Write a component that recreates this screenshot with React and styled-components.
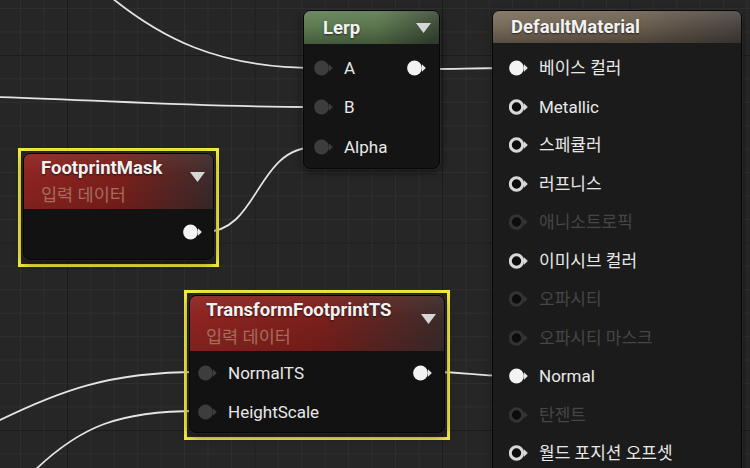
import React from 'react';
import styled, { createGlobalStyle, css } from 'styled-components';

const GlobalStyle = createGlobalStyle`
  html, body {
    margin: 0;
    padding: 0;
    background: #262626;
  }
  body {
    font-family: Roboto, "Noto Sans CJK KR", sans-serif;
  }
`;

const Canvas = styled.div`
  position: relative;
  width: 750px;
  height: 468px;
  overflow: hidden;
  background-color: #262626;
  background-image:
    linear-gradient(180deg, #1b1b1b 1px, transparent 1px),
    linear-gradient(90deg, #1b1b1b 1px, transparent 1px),
    linear-gradient(180deg, #2f2f2f 1px, transparent 1px),
    linear-gradient(90deg, #2f2f2f 1px, transparent 1px);
  background-size:
    187.5px 187.5px,
    187.5px 187.5px,
    23.44px 23.44px,
    23.44px 23.44px;
  background-position:
    0 55px,
    67px 0,
    0 8px,
    20px 0;
`;

const Wires = styled.svg`
  position: absolute;
  inset: 0;
  width: 750px;
  height: 468px;
`;

const Wire = styled.path`
  fill: none;
  stroke: #e4e4e4;
  stroke-width: 1.8;
  stroke-linecap: round;
`;

const Slot = styled.div`
  position: absolute;
  left: ${(p) => p.$x}px;
  top: ${(p) => p.$y}px;
  ${(p) =>
    p.$selected &&
    css`
      border: 3px solid #f4e93c;
      padding: 2px 2px 4px 2px;
    `}
`;

const Node = styled.div`
  width: ${(p) => p.$w}px;
  box-sizing: border-box;
  border-radius: 7px;
  border: 1px solid #060606;
  background: ${(p) => p.$body};
  box-shadow: 0 0 0 1px rgba(255, 255, 255, 0.05), 0 3px 8px rgba(0, 0, 0, 0.55);
  overflow: hidden;
`;

const Header = styled.div`
  display: flex;
  align-items: center;
  justify-content: space-between;
  box-sizing: border-box;
  height: ${(p) => p.$h}px;
  padding: 0 8px 0 ${(p) => p.$pl}px;
  background: ${(p) => p.$bg};
`;

const TitleBlock = styled.div`
  display: flex;
  flex-direction: column;
`;

const Title = styled.div`
  font-size: 18.5px;
  font-weight: 700;
  line-height: 20px;
  color: #f2f2f2;
  text-shadow: 0 1px 2px rgba(0, 0, 0, 0.6);
  white-space: nowrap;
`;

const Subtitle = styled.div`
  margin-top: 7px;
  font-size: 17.5px;
  line-height: 20px;
  color: #a66c5c;
  white-space: nowrap;
`;

const Arrow = styled.svg`
  flex: none;
  align-self: ${(p) => (p.$top ? 'flex-start' : 'center')};
  margin-top: ${(p) => (p.$top ? '18px' : '0')};
`;

const Body = styled.div`
  display: flex;
  flex-direction: column;
  padding: ${(p) => p.$pt}px ${(p) => p.$pr}px ${(p) => p.$pb}px ${(p) => p.$pl}px;
`;

const Row = styled.div`
  display: flex;
  align-items: center;
  gap: 10px;
  height: ${(p) => p.$h}px;
  font-size: 17px;
  color: ${(p) => (p.$dim ? '#464646' : '#e8e8e8')};
  white-space: nowrap;
`;

const Label = styled.span`
  line-height: 20px;
`;

const Spacer = styled.div`
  flex: 1;
`;

const PinIcon = styled.svg`
  flex: none;
  display: block;
`;

const PIN_COLORS = {
  filled: { fill: '#f3f3f3', stroke: 'none', arrow: '#e8e8e8' },
  ring: { fill: '#0c0c0c', stroke: '#d8d8d8', arrow: '#d8d8d8' },
  dim: { fill: '#0c0c0c', stroke: '#333333', arrow: '#333333' },
  muted: { fill: '#3d3d3d', stroke: 'none', arrow: '#3d3d3d' },
};

const Pin = ({ kind }) => {
  const c = PIN_COLORS[kind];
  const ringed = c.stroke !== 'none';
  return (
    <PinIcon width="20" height="16" viewBox="0 0 20 16">
      <circle
        cx="7.5"
        cy="8"
        r={ringed ? 6.2 : 7.4}
        fill={c.fill}
        stroke={c.stroke}
        strokeWidth={ringed ? 3 : 0}
      />
      <polygon points="15,4.3 18.8,8 15,11.7" fill={c.arrow} />
    </PinIcon>
  );
};

const Dropdown = ({ top }) => (
  <Arrow $top={top} width="15" height="10" viewBox="0 0 15 10">
    <polygon points="0,0 15,0 7.5,10" fill="#d6d6d6" />
  </Arrow>
);

const greenHeader = `
  linear-gradient(180deg, rgba(255,255,255,0.10) 0%, rgba(255,255,255,0) 45%, rgba(0,0,0,0.28) 100%),
  linear-gradient(90deg, #5e7d52 0%, #5a774e 55%, #3c4a38 100%)
`;
const brownHeader = `
  linear-gradient(180deg, rgba(255,255,255,0.10) 0%, rgba(255,255,255,0) 45%, rgba(0,0,0,0.28) 100%),
  linear-gradient(90deg, #7a6d5b 0%, #6e6251 55%, #4a4440 100%)
`;
const redHeader = `
  linear-gradient(180deg, rgba(255,255,255,0.06) 0%, rgba(0,0,0,0) 40%, rgba(0,0,0,0.1) 100%),
  linear-gradient(90deg, #8d2420 0%, #7b1f1b 50%, #3a2b2a 100%)
`;

const materialPins = [
  { label: '베이스 컬러', kind: 'filled' },
  { label: 'Metallic', kind: 'ring' },
  { label: '스페큘러', kind: 'ring' },
  { label: '러프니스', kind: 'ring' },
  { label: '애니소트로픽', kind: 'dim' },
  { label: '이미시브 컬러', kind: 'ring' },
  { label: '오파시티', kind: 'dim' },
  { label: '오파시티 마스크', kind: 'dim' },
  { label: 'Normal', kind: 'filled' },
  { label: '탄젠트', kind: 'dim' },
  { label: '월드 포지션 오프셋', kind: 'ring' },
];

export default function App() {
  return (
    <>
      <GlobalStyle />
      <Canvas>
        <Wires viewBox="0 0 750 468">
          <Wire d="M 100 -12 C 160 40, 220 68, 316 68" />
          <Wire d="M -2 97 C 120 101, 200 107, 316 107" />
          <Wire d="M 204 232 C 260 232, 255 147, 316 147" />
          <Wire d="M 428 69 C 460 69, 470 68, 508 68" />
          <Wire d="M 433 372 C 470 372, 470 376, 508 376" />
          <Wire d="M -10 425 C 60 390, 110 372, 198 372" />
          <Wire d="M 30 475 C 80 425, 120 411, 198 411" />
        </Wires>

        <Slot $x={303} $y={10}>
          <Node $w={137} $body="#141414">
            <Header $h={33} $pl={19} $bg={greenHeader}>
              <Title>Lerp</Title>
              <Dropdown />
            </Header>
            <Body $pt={4} $pr={12} $pb={1} $pl={10}>
              <Row $h={39.5}>
                <Pin kind="muted" />
                <Label>A</Label>
                <Spacer />
                <Pin kind="filled" />
              </Row>
              <Row $h={39.5}>
                <Pin kind="muted" />
                <Label>B</Label>
              </Row>
              <Row $h={39.5}>
                <Pin kind="muted" />
                <Label>Alpha</Label>
              </Row>
            </Body>
          </Node>
        </Slot>

        <Slot $x={492} $y={10}>
          <Node $w={250} $body="#1b1b1b">
            <Header $h={32} $pl={18} $bg={brownHeader}>
              <Title>DefaultMaterial</Title>
            </Header>
            <Body $pt={6} $pr={12} $pb={40} $pl={16}>
              {materialPins.map((p) => (
                <Row key={p.label} $h={38.5} $dim={p.kind === 'dim'}>
                  <Pin kind={p.kind} />
                  <Label>{p.label}</Label>
                </Row>
              ))}
            </Body>
          </Node>
        </Slot>

        <Slot $x={18} $y={148} $selected>
          <Node $w={191} $body="#121212">
            <Header $h={55} $pl={17} $bg={redHeader}>
              <TitleBlock>
                <Title>FootprintMask</Title>
                <Subtitle>입력 데이터</Subtitle>
              </TitleBlock>
              <Dropdown top />
            </Header>
            <Body $pt={4} $pr={10} $pb={8} $pl={10}>
              <Row $h={38}>
                <Spacer />
                <Pin kind="filled" />
              </Row>
            </Body>
          </Node>
        </Slot>

        <Slot $x={184} $y={290} $selected>
          <Node $w={256} $body="#121212">
            <Header $h={55} $pl={16} $bg={redHeader}>
              <TitleBlock>
                <Title>TransformFootprintTS</Title>
                <Subtitle>입력 데이터</Subtitle>
              </TitleBlock>
              <Dropdown top />
            </Header>
            <Body $pt={2} $pr={11} $pb={1} $pl={8}>
              <Row $h={39}>
                <Pin kind="muted" />
                <Label>NormalTS</Label>
                <Spacer />
                <Pin kind="filled" />
              </Row>
              <Row $h={39}>
                <Pin kind="muted" />
                <Label>HeightScale</Label>
              </Row>
            </Body>
          </Node>
        </Slot>
      </Canvas>
    </>
  );
}
